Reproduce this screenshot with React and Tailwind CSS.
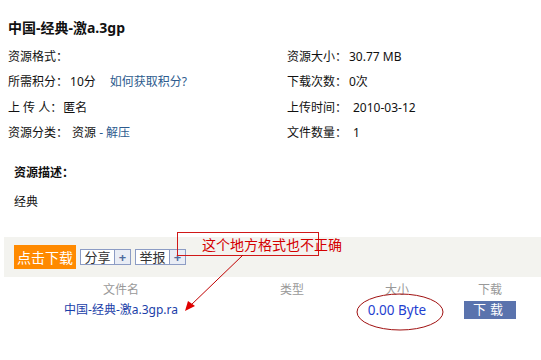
import React from "react";

const FONT = { fontFamily: '"Noto Sans", "Noto Sans CJK SC", sans-serif' };

const leftRows = [
  { label: "资源格式：", value: null },
  { label: "所需积分：", value: <><span className="ml-[2px]">10分</span><span className="ml-[14px] text-[#2d5b8e]">如何获取积分?</span></> },
  { label: "上 传 人：", value: <span className="ml-[1px]">匿名</span> },
  { label: "资源分类：", value: <span className="ml-[4px]">资源 <span className="text-[#2d5b8e]">- 解压</span></span> },
];

const rightRows = [
  { label: "资源大小：", value: <span className="ml-[2px]">30.77 MB</span> },
  { label: "下载次数：", value: <span className="ml-[2px]">0次</span> },
  { label: "上传时间：", value: <span className="ml-[6px]">2010-03-12</span> },
  { label: "文件数量：", value: <span className="ml-[6px]">1</span> },
];

function PlusBox({ text }) {
  return (
    <span className="flex h-[16px] border border-[#8c9cc4] bg-white text-[13px] leading-[14px]">
      <span className="w-[33px] text-center text-[#333]">{text}</span>
      <span className="w-[16px] border-l border-[#8c9cc4] bg-[#e9edf5] text-center font-bold text-[#4f6b9f]">+</span>
    </span>
  );
}

export default function App() {
  return (
    <div className="relative w-[541px] h-[360px] bg-white text-[12px] text-[#111] overflow-hidden" style={FONT}>
      <div className="pl-[8px] pt-[18px]">
        <h1 className="h-[20px] text-[14px] font-bold leading-[20px]">中国-经典-激a.3gp</h1>
        <div className="mt-[6px] grid grid-cols-[279px_1fr]">
          <div>
            {leftRows.map((r) => (
              <div key={r.label} className="flex h-[25.5px] items-center whitespace-nowrap">
                <span className="shrink-0">{r.label}</span>
                {r.value}
              </div>
            ))}
          </div>
          <div>
            {rightRows.map((r) => (
              <div key={r.label} className="flex h-[25.5px] items-center whitespace-nowrap">
                <span className="w-[60px] shrink-0">{r.label}</span>
                {r.value}
              </div>
            ))}
          </div>
        </div>
      </div>

      <div className="pl-[14px] mt-[17px]">
        <div className="h-[20px] font-bold leading-[20px]">资源描述：</div>
        <div className="mt-[9px] h-[20px] leading-[20px]">经典</div>
      </div>

      <div className="ml-[4px] mt-[25px] flex h-[40px] items-center gap-[4px] bg-[#f3f3ef] pl-[10px]">
        <span className="flex h-[24px] w-[62px] items-center justify-center bg-[#ff8a00] text-[14px] text-white">点击下载</span>
        <PlusBox text="分享" />
        <PlusBox text="举报" />
      </div>

      <div className="grid grid-cols-[242px_100px_110px_76px] text-center">
        <div className="h-[24px] leading-[26px] text-[#999]">文件名</div>
        <div className="h-[24px] leading-[26px] text-[#999]">类型</div>
        <div className="h-[24px] leading-[26px] text-[#999]">大小</div>
        <div className="h-[24px] leading-[26px] text-[#999]">下载</div>
        <div className="leading-[18px] text-[#1a3ea8]">中国-经典-激a.3gp.ra</div>
        <div></div>
        <div className="text-[13.5px] leading-[18px] text-[#1f3fd0]">0.00 Byte</div>
        <div className="flex justify-center">
          <span className="flex h-[18px] w-[52px] items-center justify-center bg-[#5a73ad] text-[13px] tracking-[4px] text-white">下载</span>
        </div>
      </div>

      {/* annotations drawn over the page */}
      <svg className="absolute left-0 top-0 pointer-events-none" width="541" height="360">
        <rect x="177.5" y="232.5" width="141" height="23" fill="none" stroke="#d01818" strokeWidth="1" />
        <line x1="243" y1="255" x2="190" y2="306" stroke="#c00000" strokeWidth="1" />
        <polygon points="185,311 188,301 195,306" fill="#e00000" />
        <ellipse cx="400" cy="312" rx="43" ry="18" fill="none" stroke="#a01010" strokeWidth="1" />
      </svg>
      <div className="absolute left-[202px] top-[236px] text-[14px] leading-[18px] text-[#d40000]">这个地方格式也不正确</div>
    </div>
  );
}
